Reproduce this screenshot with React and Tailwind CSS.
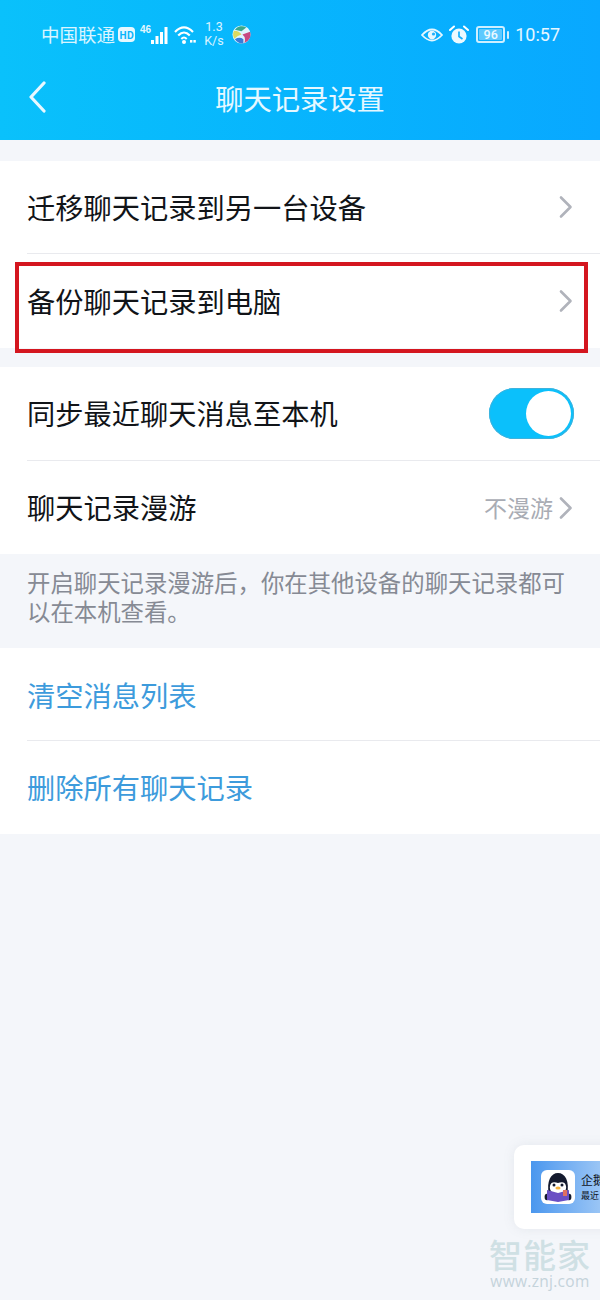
import React from "react";

function Chevron({ className = "" }) {
  return (
    <svg width="14" height="24" viewBox="0 0 14 24" fill="none" className={className}>
      <path d="M2 2.5 L11.5 12 L2 21.5" stroke="#b0b3bb" strokeWidth="2.6" strokeLinecap="round" strokeLinejoin="round" />
    </svg>
  );
}

function StatusBar() {
  return (
    <div className="h-[60px] flex items-center pl-[41px] pr-[40px] pt-[9px] justify-between">
      <div className="flex items-center">
        <span className="text-[18.5px] leading-none text-white/85">中国联通</span>
        <span className="ml-[3px] w-[17px] h-[15px] rounded-[4px] bg-white/90 text-[#0ab4fb] text-[10px] font-bold leading-[15px] text-center">HD</span>
        <svg width="33" height="22" viewBox="0 0 33 22" className="ml-[5px] -mt-[2px]">
          <text x="0" y="10" fontSize="10" fontWeight="700" fill="#fff" fillOpacity="0.9" fontFamily="Liberation Sans">46</text>
          <rect x="11" y="17" width="3" height="4" fill="#fff" />
          <rect x="15.5" y="13" width="3" height="8" fill="#fff" />
          <rect x="20" y="9" width="3" height="12" fill="#fff" />
          <rect x="24.5" y="4" width="3" height="17" fill="#fff" />
        </svg>
        <svg width="24" height="20" viewBox="0 0 24 20" fill="none" className="ml-[1px]">
          <path d="M1 7 Q10 -2 19 7" stroke="#fff" strokeWidth="2.2" />
          <path d="M4.2 10.5 Q10 4.5 15.8 10.5" stroke="#fff" strokeWidth="2.2" />
          <path d="M7.3 14 Q10 11.2 12.7 14" stroke="#fff" strokeWidth="2" />
          <circle cx="10" cy="17" r="2" fill="#fff" />
          <rect x="16" y="15" width="2.4" height="2.6" fill="#fff" />
          <rect x="19.4" y="15" width="2.4" height="2.6" fill="#fff" />
        </svg>
        <div className="ml-[5px] w-[22px] flex flex-col items-center text-[12.5px] leading-[14.5px] text-white/85 font-['Roboto',sans-serif] -mt-[1px]">
          <span>1.3</span>
          <span>K/s</span>
        </div>
        <svg width="19" height="19" viewBox="0 0 20 20" fill="none" className="ml-[7px]">
          <circle cx="10" cy="10" r="9.5" fill="#dff6ff" />
          <path d="M3 5 A9 9 0 0 1 15 2.5 L10 6.5 Z" fill="#3aa98c" />
          <path d="M2 6 Q8 6 10 10 Q6 11 2.5 14.5 A9.5 9.5 0 0 1 2 6 Z" fill="#dcd95f" />
          <path d="M3 15 Q8 12 12 15 L12 19.3 A9.5 9.5 0 0 1 3 15 Z" fill="#3a7ad8" />
          <path d="M19 7 A9.5 9.5 0 0 1 13 19 Q15 13 11 10 Z" fill="#c84a82" />
        </svg>
      </div>
      <div className="flex items-center">
        <svg width="22" height="16" viewBox="0 0 22 16" fill="none">
          <path d="M1 8 Q11 -3 21 8 Q11 19 1 8 Z" stroke="#fff" strokeOpacity="0.9" strokeWidth="1.8" />
          <circle cx="11" cy="8" r="4.2" fill="#fff" fillOpacity="0.9" />
          <circle cx="12.5" cy="7" r="1.6" fill="#1fb0fb" />
        </svg>
        <svg width="20" height="20" viewBox="0 0 20 20" fill="none" className="ml-[6px]">
          <circle cx="10" cy="11" r="7.6" fill="#fff" fillOpacity="0.92" />
          <path d="M10 6.5 V11.5 L13.5 14" stroke="#13aefc" strokeWidth="1.7" />
          <path d="M1 5 L5 1.5 M19 5 L15 1.5" stroke="#fff" strokeWidth="2" strokeLinecap="round" />
        </svg>
        <div className="ml-[7px] w-[29px] h-[17px] rounded-[3px] border-2 border-white/80 p-[1px] flex">
          <span className="flex-1 bg-white/35 rounded-[1px] text-[12.5px] leading-[11px] font-medium text-center text-white/90 font-['Roboto',sans-serif]">96</span>
        </div>
        <span className="ml-[2px] w-[2px] h-[8px] bg-white/80 rounded-[1px]" />
        <span className="ml-[6px] text-[18px] leading-none text-white/90 font-['Roboto',sans-serif]">10:57</span>
      </div>
    </div>
  );
}

function Row({ label, right, divider, tone = "text-[#111418]", h = "h-[93px]", extra = "" }) {
  return (
    <div className={`${h} bg-white pl-[27px] pr-[27px] flex flex-col`}>
      <div className={`flex-1 flex items-center justify-between ${extra}`}>
        <span className={`text-[28.25px] leading-none ${tone}`}>{label}</span>
        {right}
      </div>
      {divider && <div className="h-px -mr-[27px] bg-[#e9eaee]" />}
    </div>
  );
}

export default function App() {
  return (
    <div className="relative w-[600px] h-[1300px] overflow-hidden bg-[#f4f6fa] font-['Noto_Sans_CJK_SC','Noto_Sans',sans-serif]">
      <header className="h-[140px] bg-gradient-to-r from-[#0ac1fb] to-[#09a8ff]">
        <StatusBar />
        <div className="relative h-[80px] flex items-center justify-center pb-[3px]">
          <svg width="20" height="32" viewBox="0 0 20 32" fill="none" className="absolute left-[28px] top-[21px]">
            <path d="M16 2 L3 16 L16 30" stroke="#e8f8ff" strokeWidth="3.2" strokeLinecap="round" strokeLinejoin="round" />
          </svg>
          <h1 className="text-[28.25px] leading-none font-normal text-white/90">聊天记录设置</h1>
        </div>
      </header>

      <section className="mt-[21px] flex flex-col">
        <Row label="迁移聊天记录到另一台设备" divider right={<Chevron />} />
        <Row label="备份聊天记录到电脑" h="h-[94px]" right={<Chevron />} />
      </section>

      <section className="mt-[19px] flex flex-col">
        <Row
          label="同步最近聊天消息至本机"
          divider
          h="h-[94px]"
          right={
            <div className="w-[85px] h-[51px] -mr-[1px] rounded-full bg-[#0bc0fb] flex items-center justify-end pr-[3px] shadow-[inset_0_0_0_1px_#3fb2dc]">
              <span className="w-[45px] h-[45px] rounded-full bg-white" />
            </div>
          }
        />
        <Row
          label="聊天记录漫游"
          right={
            <div className="flex items-center gap-[6px]">
              <span className="text-[23px] leading-none text-[#a9acb4]">不漫游</span>
              <Chevron />
            </div>
          }
        />
      </section>

      <p className="h-[94px] pl-[27px] pr-[20px] pt-[14px] text-[23.4px] leading-[29px] text-[#868a94]">
        开启聊天记录漫游后，你在其他设备的聊天记录都可以在本机查看。
      </p>

      <section className="flex flex-col">
        <Row label="清空消息列表" divider tone="text-[#3d9bdc]" extra="pt-[2px]" />
        <Row label="删除所有聊天记录" tone="text-[#3d9bdc]" />
      </section>

      <div className="absolute left-[15px] top-[262px] w-[573px] h-[91px] border-[4px] border-[#d4161f]" />

      <div className="absolute left-[514px] top-[1145px] w-[100px] h-[84px] rounded-l-[10px] bg-white pl-[17px] pt-[16px] shadow-[0_0_12px_rgba(120,130,150,0.12)]">
        <div className="h-[52px] pl-[10px] flex items-center gap-[6px] bg-gradient-to-r from-[#4a97ee] to-[#a9cef6]">
          <div className="w-[34px] h-[34px] rounded-[6px] bg-white flex items-center justify-center">
            <svg width="30" height="32" viewBox="0 0 30 32">
              <path d="M6 24 C3 10 8 2 15 2 C22 2 27 10 24 24 Z" fill="#141a2e" />
              <path d="M7 15 C8 10 12 11 15 12 C18 11 22 10 23 15 C24 20 20 23 15 23 C10 23 6 20 7 15 Z" fill="#fff" />
              <circle cx="11" cy="14" r="1.5" fill="#141a2e" />
              <circle cx="19" cy="14" r="1.5" fill="#141a2e" />
              <ellipse cx="15" cy="17" rx="2.6" ry="1.5" fill="#f5b13d" />
              <ellipse cx="4" cy="26" rx="2.4" ry="3.2" fill="#141a2e" />
              <ellipse cx="26" cy="26" rx="2.4" ry="3.2" fill="#141a2e" />
              <path d="M4 19 L15 22 L26 19 V29 L15 31 L4 29 Z" fill="#6a4fc4" />
              <rect x="20" y="19" width="4" height="6" fill="#e0705f" />
            </svg>
          </div>
          <div className="flex flex-col gap-[3px] text-[#10141c]">
            <span className="text-[12px] leading-[14px] whitespace-nowrap">企鹅</span>
            <span className="text-[9px] leading-[11px] whitespace-nowrap">最近</span>
          </div>
        </div>
      </div>

      <div className="absolute left-[490px] top-[1236px] w-[100px] flex flex-col items-center">
        <span className="text-[33px] leading-[37px] tracking-[1px] font-medium text-[#cfe0e4] whitespace-nowrap">智能家</span>
        <span className="text-[15.5px] leading-[17px] tracking-[0.3px] text-[#c4d3db] whitespace-nowrap font-['Open_Sans',sans-serif]">www.znj.com</span>
      </div>
    </div>
  );
}
